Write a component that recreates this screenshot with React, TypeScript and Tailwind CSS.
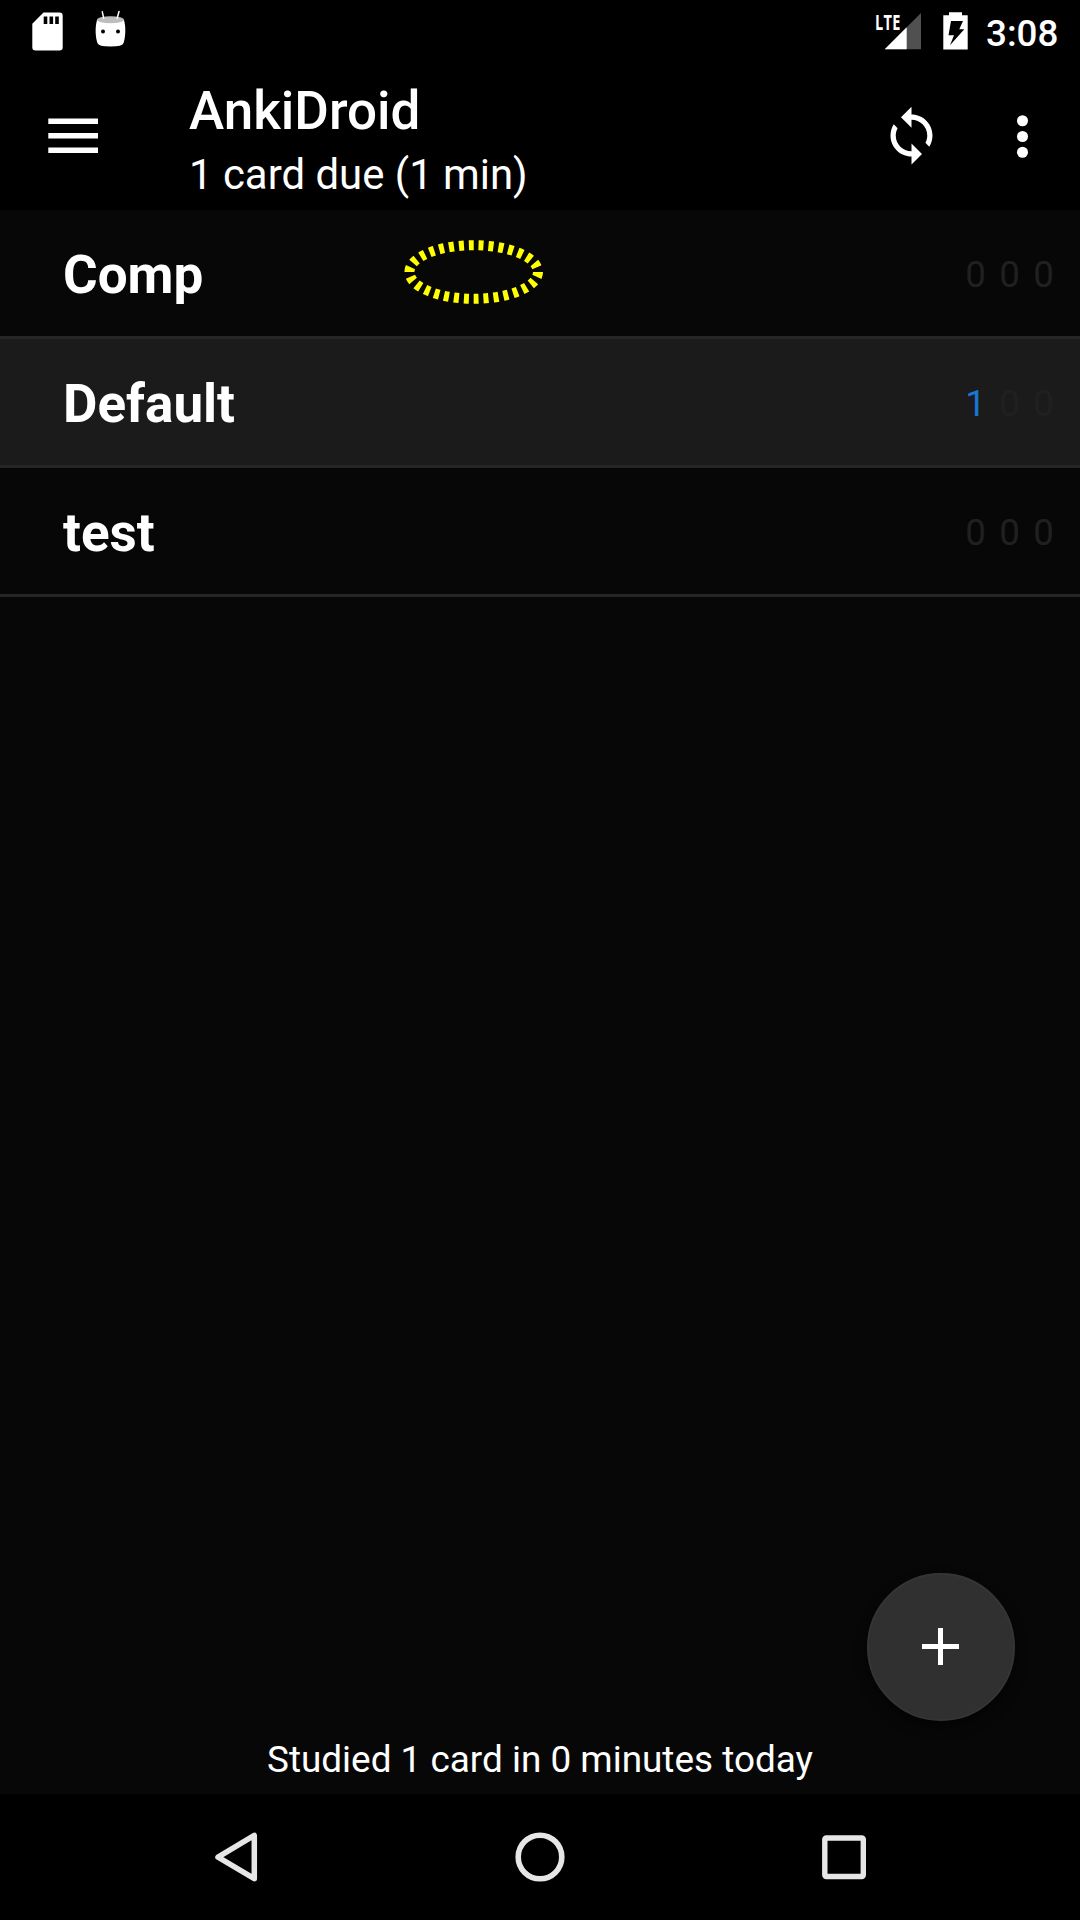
const decks = [
  { name: "Comp", counts: [0, 0, 0], selected: false },
  { name: "Default", counts: [1, 0, 0], selected: true },
  { name: "test", counts: [0, 0, 0], selected: false },
];

function StatusBar() {
  return (
    <div className="flex h-[63px] shrink-0 items-start justify-between bg-black">
      <svg width="140" height="63" viewBox="0 0 140 63">
        <path d="M43.5 12.6H59.5a3.2 3.2 0 0 1 3.2 3.2V47.3a3.2 3.2 0 0 1-3.2 3.2H35.5a3.2 3.2 0 0 1-3.2-3.2V23.8z" fill="#fff" />
        <path d="M43.7 16.5h3.6v7.6h-3.6zM49.5 16.5h3.6v7.6h-3.6zM55.2 16.5h3.6v7.6h-3.6z" fill="#000" />
        <path d="M97 20C95.300 26 95 35 97.400 43Q98.300 46.600 110.500 46.600T123.600 43C126 35 125.700 26 124 20z" fill="#fff" />
        <ellipse cx="110.500" cy="19.800" rx="13.500" ry="3.500" fill="#bdbdbd" />
        <path d="M102.300 11.800l1.400 6.500M119 11.500l-1.800 6.800" stroke="#fff" strokeWidth="1.500" strokeLinecap="round" />
        <circle cx="103" cy="31.500" r="2" fill="#000" />
        <circle cx="118" cy="31.500" r="2" fill="#000" />
      </svg>
      <div className="flex items-start">
        <div className="relative h-[63px] w-[113px]">
          <svg width="113" height="63" viewBox="873 0 113 63">
            <path d="M921 13v36.300h-36.300z" fill="#505050" />
            <path d="M906.700 27.300v22h-22z" fill="#fff" />
            <path d="M943.300 15.200h5.700v-3h13v3h5.700v34.300h-24.400z" fill="#fff" />
            <path d="M951 21h12l-3.700 8.300h5L950 45.300l4-10h-5.500z" fill="#000" />
          </svg>
          <span className="absolute top-[10px] left-[2px] origin-left scale-x-[0.66] font-['Open_Sans'] text-[22px] leading-[22px] font-bold tracking-[0.5px] text-white">
            LTE
          </span>
        </div>
        <span className="w-[94px] pt-[12px] text-[36.75px] leading-[43px] font-medium whitespace-nowrap">
          3:08
        </span>
      </div>
    </div>
  );
}

function Toolbar() {
  return (
    <header className="flex h-[147px] shrink-0 bg-black pr-[26px]">
      <button className="flex w-[189px] items-center pb-[2px] pl-[48px]" aria-label="Menu">
        <svg width="51" height="36" viewBox="0 0 51 36" fill="#fff">
          <path d="M.3 .4H50v5.600H.3zM.3 15H50v5.600H.3zM.3 29.400H50v5.600H.3z" />
        </svg>
      </button>
      <div className="flex-1 pt-[17px]">
        <h1 className="text-[53px] leading-[62px] font-medium">AnkiDroid</h1>
        <p className="mt-2 text-[41.9px] leading-[50px]">1 card due (1 min)</p>
      </div>
      <div className="flex items-center gap-[48px]">
        <svg className="-mt-[2px]" width="63" height="63" viewBox="0 0 24 24" fill="#fff">
          <path d="M12 4V1L8 5l4 4V6c3.310 0 6 2.690 6 6 0 1.010-.25 1.970-.7 2.800l1.460 1.460C19.540 15.030 20 13.570 20 12c0-4.420-3.580-8-8-8zm0 14c-3.310 0-6-2.690-6-6 0-1.010.25-1.970.7-2.800L5.240 7.740C4.460 8.970 4 10.430 4 12c0 4.420 3.580 8 8 8v3l4-4-4-4v3z" />
        </svg>
        <svg width="63" height="63" viewBox="0 0 24 24" fill="#fff">
          <circle cx="12" cy="6" r="2.100" />
          <circle cx="12" cy="12" r="2.100" />
          <circle cx="12" cy="18" r="2.100" />
        </svg>
      </div>
    </header>
  );
}

function DeckList() {
  return (
    <ul className="relative">
      {decks.map((deck) => (
        <li
          key={deck.name}
          className={`flex h-[129px] items-center justify-between border-b-[3px] border-[#262626] pt-[2px] pr-[26px] pl-[63px] ${deck.selected ? "bg-[#1b1b1b]" : ""}`}
        >
          <span className="pt-[2px] text-[53px] leading-[62px] font-bold">{deck.name}</span>
          <span className="flex gap-[13.4px] text-[36.75px] leading-[43px]">
            {deck.counts.map((n, i) => (
              <span key={i} className={n > 0 ? "text-[#1976d2]" : "text-[#202020]"}>
                {n}
              </span>
            ))}
          </span>
        </li>
      ))}
      <svg className="absolute top-[28px] left-[402px]" width="144" height="68" viewBox="402 238 144 68">
        <ellipse cx="473.700" cy="272" rx="64.300" ry="26.800" fill="none" stroke="#ff0" strokeWidth="10" strokeDasharray="5 4.930" />
      </svg>
    </ul>
  );
}

function NavigationBar() {
  return (
    <nav className="flex h-[126px] shrink-0 items-center justify-center bg-black">
      <svg width="660" height="126" viewBox="210 1794 660 126" fill="none" stroke="#e6e6e6" strokeLinejoin="round">
        <path d="M254.300 1835.300v43.400L218 1857.200z" strokeWidth="5.500" />
        <circle cx="540" cy="1857" r="21.800" strokeWidth="5.600" />
        <rect x="824.800" y="1838" width="38.500" height="38.500" rx="1.500" strokeWidth="5.400" />
      </svg>
    </nav>
  );
}

export default function App() {
  return (
    <div className="flex h-[1920px] w-[1080px] flex-col overflow-hidden bg-black font-[Roboto,sans-serif] text-white">
      <StatusBar />
      <Toolbar />
      <main className="relative flex flex-1 flex-col justify-between bg-[#070707]">
        <DeckList />
        <p className="pb-[13px] text-center text-[36.9px] leading-[43px]">Studied 1 card in 0 minutes today</p>
        <button
          aria-label="Add"
          className="absolute right-[65px] bottom-[73px] flex size-[148px] items-center justify-center rounded-full border-2 border-[#353535] bg-[#303030] shadow-[0_6px_12px_rgba(0,0,0,0.5)]"
        >
          <svg width="38" height="38" viewBox="0 0 38 38" fill="#fff">
            <path d="M16 0h5v16h16v5H21v16h-5V21H0v-5h16z" />
          </svg>
        </button>
      </main>
      <NavigationBar />
    </div>
  );
}
